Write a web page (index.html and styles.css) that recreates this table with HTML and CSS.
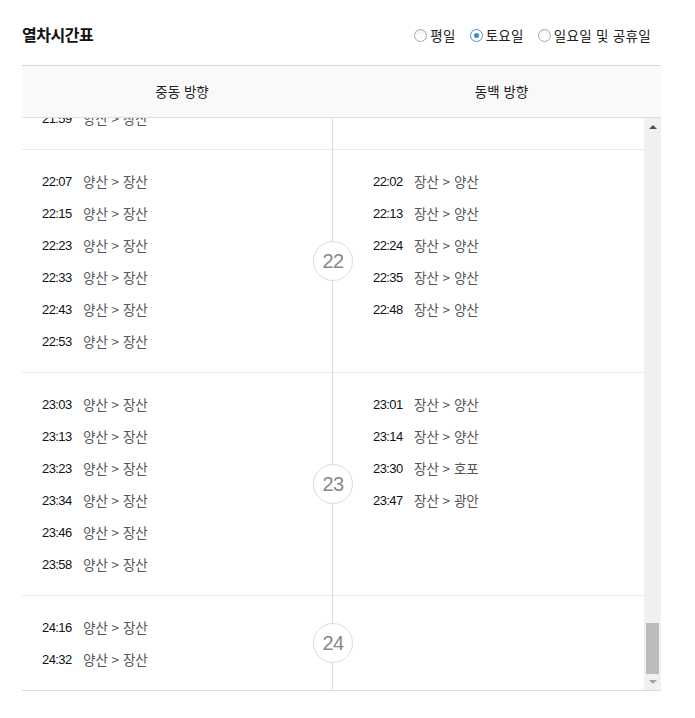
FILE: index.html
```html
<!DOCTYPE html>
<html lang="ko">
<head>
<meta charset="utf-8">
<link rel="stylesheet" href="styles.css">
</head>
<body>
<div class="wrap">
  <div class="top">
    <h1 class="title">열차시간표</h1>
    <div class="radios">
      <label class="radio"><span class="dot"></span>평일</label>
      <label class="radio on"><span class="dot"></span>토요일</label>
      <label class="radio"><span class="dot"></span>일요일 및 공휴일</label>
    </div>
  </div>
  <div class="table">
    <div class="thead">
      <div class="th">중동 방향</div>
      <div class="th">동백 방향</div>
    </div>
    <div class="tbody">
      <div class="list">
        <div class="group">
          <div class="col left">
            <div class="row"><span class="time">21:07</span><span class="route">양산 &gt; 장산</span></div>
            <div class="row"><span class="time">21:15</span><span class="route">양산 &gt; 장산</span></div>
            <div class="row"><span class="time">21:23</span><span class="route">양산 &gt; 장산</span></div>
            <div class="row"><span class="time">21:33</span><span class="route">양산 &gt; 장산</span></div>
            <div class="row"><span class="time">21:43</span><span class="route">양산 &gt; 장산</span></div>
            <div class="row"><span class="time">21:59</span><span class="route">양산 &gt; 장산</span></div>
          </div>
          <div class="hour"><span>21</span></div>
          <div class="col right">
            <div class="row"><span class="time">21:02</span><span class="route">장산 &gt; 양산</span></div>
            <div class="row"><span class="time">21:13</span><span class="route">장산 &gt; 양산</span></div>
            <div class="row"><span class="time">21:26</span><span class="route">장산 &gt; 양산</span></div>
            <div class="row"><span class="time">21:38</span><span class="route">장산 &gt; 양산</span></div>
            <div class="row"><span class="time">21:50</span><span class="route">장산 &gt; 양산</span></div>
          </div>
        </div>
        <div class="group">
          <div class="col left">
            <div class="row"><span class="time">22:07</span><span class="route">양산 &gt; 장산</span></div>
            <div class="row"><span class="time">22:15</span><span class="route">양산 &gt; 장산</span></div>
            <div class="row"><span class="time">22:23</span><span class="route">양산 &gt; 장산</span></div>
            <div class="row"><span class="time">22:33</span><span class="route">양산 &gt; 장산</span></div>
            <div class="row"><span class="time">22:43</span><span class="route">양산 &gt; 장산</span></div>
            <div class="row"><span class="time">22:53</span><span class="route">양산 &gt; 장산</span></div>
          </div>
          <div class="hour"><span>22</span></div>
          <div class="col right">
            <div class="row"><span class="time">22:02</span><span class="route">장산 &gt; 양산</span></div>
            <div class="row"><span class="time">22:13</span><span class="route">장산 &gt; 양산</span></div>
            <div class="row"><span class="time">22:24</span><span class="route">장산 &gt; 양산</span></div>
            <div class="row"><span class="time">22:35</span><span class="route">장산 &gt; 양산</span></div>
            <div class="row"><span class="time">22:48</span><span class="route">장산 &gt; 양산</span></div>
          </div>
        </div>
        <div class="group">
          <div class="col left">
            <div class="row"><span class="time">23:03</span><span class="route">양산 &gt; 장산</span></div>
            <div class="row"><span class="time">23:13</span><span class="route">양산 &gt; 장산</span></div>
            <div class="row"><span class="time">23:23</span><span class="route">양산 &gt; 장산</span></div>
            <div class="row"><span class="time">23:34</span><span class="route">양산 &gt; 장산</span></div>
            <div class="row"><span class="time">23:46</span><span class="route">양산 &gt; 장산</span></div>
            <div class="row"><span class="time">23:58</span><span class="route">양산 &gt; 장산</span></div>
          </div>
          <div class="hour"><span>23</span></div>
          <div class="col right">
            <div class="row"><span class="time">23:01</span><span class="route">장산 &gt; 양산</span></div>
            <div class="row"><span class="time">23:14</span><span class="route">장산 &gt; 양산</span></div>
            <div class="row"><span class="time">23:30</span><span class="route">장산 &gt; 호포</span></div>
            <div class="row"><span class="time">23:47</span><span class="route">장산 &gt; 광안</span></div>
          </div>
        </div>
        <div class="group last">
          <div class="col left">
            <div class="row"><span class="time">24:16</span><span class="route">양산 &gt; 장산</span></div>
            <div class="row"><span class="time">24:32</span><span class="route">양산 &gt; 장산</span></div>
          </div>
          <div class="hour"><span>24</span></div>
          <div class="col right"></div>
        </div>
      </div>
      <div class="scrollbar">
        <div class="arrow up"></div>
        <div class="track"><div class="thumb"></div></div>
        <div class="arrow down"></div>
      </div>
    </div>
  </div>
</div>
</body>
</html>
```
FILE: styles.css
```css
* { box-sizing: border-box; }
html, body { margin: 0; padding: 0; background: #fff; }
body {
  font-family: "Noto Sans CJK KR", "Noto Sans", sans-serif;
  color: #333;
}
.wrap {
  width: 639px;
  margin-left: 22px;
}
.top {
  display: flex;
  justify-content: space-between;
  align-items: center;
  height: 20px;
  margin-top: 24px;
  margin-bottom: 21px;
}
.title {
  margin: 0;
  font-size: 16px;
  font-weight: 700;
  letter-spacing: -0.5px;
  color: #111;
  line-height: 20px;
}
.radios {
  display: flex;
  align-items: center;
  gap: 14px;
  margin-right: 10px;
  padding-top: 2px;
}
.radio {
  display: flex;
  align-items: center;
  gap: 3px;
  font-size: 13.5px;
  letter-spacing: 0.3px;
  color: #222;
  line-height: 20px;
}
.dot {
  width: 13px;
  height: 13px;
  border-radius: 50%;
  border: 1px solid #a8a8a8;
  background: linear-gradient(#f4f4f4, #fff);
  display: flex;
  align-items: center;
  justify-content: center;
}
.radio.on .dot {
  border-color: #4a8fd8;
  background: #fff;
}
.radio.on .dot::after {
  content: "";
  width: 5px;
  height: 5px;
  border-radius: 50%;
  background: #3f86d4;
}
.table {
  border-top: 1px solid #d8d8d8;
  border-bottom: 1px solid #dcdcdc;
}
.thead {
  display: grid;
  grid-template-columns: 320px 319px;
  height: 52px;
  background: #f9f9f9;
  border-bottom: 1px solid #dedede;
}
.th {
  text-align: center;
  line-height: 51px;
  font-size: 13.5px;
  color: #222;
}
.tbody {
  display: flex;
  height: 572px;
}
.list {
  position: relative;
  width: 623px;
  height: 572px;
  overflow: hidden;
  display: flex;
  flex-direction: column;
  justify-content: flex-end;
}
.list::before {
  content: "";
  position: absolute;
  left: 310px;
  top: 0;
  bottom: 0;
  width: 1px;
  background: #dcdcdc;
}
.group {
  flex: none;
  display: grid;
  grid-template-columns: 310px 1px 312px;
  align-items: start;
  padding: 15px 0;
  border-bottom: 1px solid #ececec;
}
.group.last { border-bottom: 0; }
.col.left { padding-left: 20px; }
.col.right { padding-left: 40px; }
.row {
  display: flex;
  align-items: center;
  height: 32px;
}
.time {
  width: 41px;
  font-family: "Liberation Sans", Arial, sans-serif;
  font-size: 13px;
  letter-spacing: -0.6px;
  color: #111;
}
.route {
  font-size: 13.5px;
  color: #555;
}
.hour {
  align-self: center;
  position: relative;
  height: 0;
}
.hour span {
  position: absolute;
  left: -19px;
  top: -20px;
  width: 40px;
  height: 40px;
  border-radius: 50%;
  border: 1px solid #dcdcdc;
  background: #fff;
  z-index: 1;
  display: flex;
  align-items: center;
  justify-content: center;
  font-family: "Liberation Sans", Arial, sans-serif;
  font-size: 20px;
  letter-spacing: -0.5px;
  color: #888;
}
.scrollbar {
  width: 17px;
  background: #f0f0f0;
  display: flex;
  flex-direction: column;
}
.arrow {
  height: 17px;
  display: flex;
  align-items: center;
  justify-content: center;
}
.arrow.down { height: 16px; }
.arrow.up::after {
  content: "";
  border-left: 4px solid transparent;
  border-right: 4px solid transparent;
  border-bottom: 4px solid #505050;
}
.arrow.down::after {
  content: "";
  border-left: 4px solid transparent;
  border-right: 4px solid transparent;
  border-top: 4px solid #a3a3a3;
}
.track {
  flex: 1;
  display: flex;
  flex-direction: column;
  justify-content: flex-end;
  padding: 0 2px;
}
.thumb {
  height: 51px;
  background: #bcbcbc;
}
```
